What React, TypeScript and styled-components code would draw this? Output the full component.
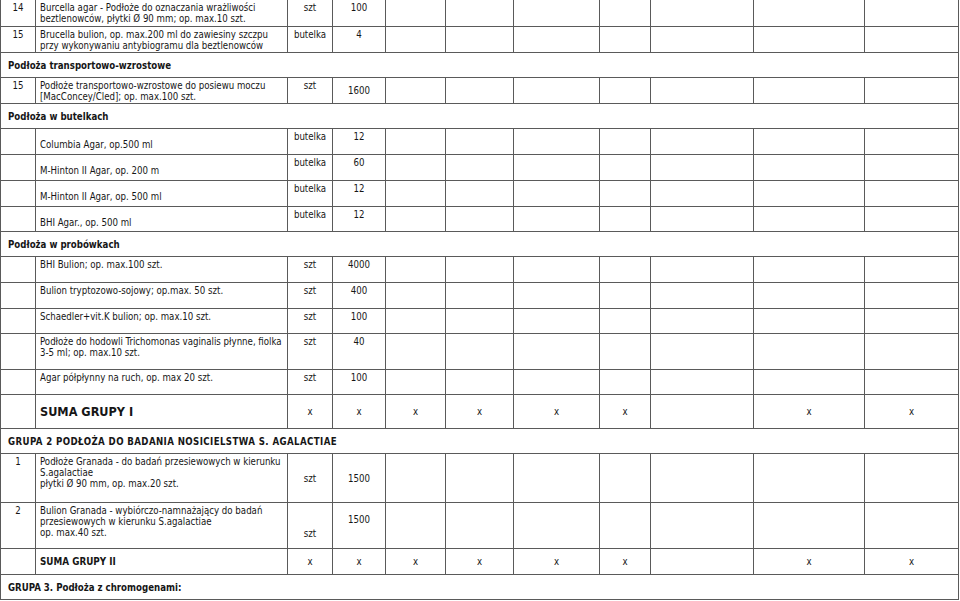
import styled, { createGlobalStyle } from 'styled-components'

const GlobalStyle = createGlobalStyle`
  html, body {
    margin: 0;
    padding: 0;
    background: #fff;
  }
  body {
    font-family: 'DejaVu Sans Condensed', 'DejaVu Sans', sans-serif;
    color: #161616;
    overflow: hidden;
  }
`

const Page = styled.div`
  width: 960px;
  height: 601px;
  overflow: hidden;
`

const Sheet = styled.table`
  border-collapse: collapse;
  table-layout: fixed;
  width: 959px;
  margin-top: -1px;
  font-size: 9.6px;
  line-height: 11px;
`

type VAlign = 'top' | 'middle' | 'bottom'

const Row = styled.tr<{ $h: number }>`
  height: ${({ $h }) => $h}px;
`

const Cell = styled.td<{ $v?: VAlign; $pt?: number; $center?: boolean }>`
  border: 1px solid #5a5a5a;
  padding: ${({ $pt }) => $pt ?? 2}px 3px 0 3px;
  vertical-align: ${({ $v }) => $v ?? 'top'};
  text-align: ${({ $center }) => ($center ? 'center' : 'left')};
  white-space: nowrap;
  overflow: hidden;
`

const DescCell = styled(Cell)`
  padding-left: 4px;
`

const SectionCell = styled.td<{ $wide?: boolean }>`
  border: 1px solid #5a5a5a;
  padding: 0 7px;
  vertical-align: middle;
  font-weight: bold;
  font-size: 9.6px;
  letter-spacing: ${({ $wide }) => ($wide ? 0.4 : 0)}px;
  white-space: nowrap;
`

const SumTitle = styled.span<{ $big?: boolean }>`
  font-weight: bold;
  font-size: ${({ $big }) => ($big ? 12.6 : 9.8)}px;
`

const colWidths = [35, 252, 45, 53, 60, 68, 86, 51, 103, 111, 94]

type Item = {
  no?: string
  desc: string[]
  unit: string
  qty: string
  h: number
  descV?: VAlign
  descPt?: number
  unitPt?: number
  qtyV?: VAlign
  qtyPt?: number
}

type Block =
  | { kind: 'section'; title: string; h: number; wide?: boolean }
  | { kind: 'item'; item: Item }
  | { kind: 'sum'; title: string; big?: boolean; h: number }

const bottle = (desc: string, qty: string, h = 26): Block => ({
  kind: 'item',
  item: { desc: [desc], unit: 'butelka', qty, h, descV: 'middle', descPt: 6 },
})

const tube = (desc: string[], qty: string, h = 26): Block => ({
  kind: 'item',
  item: { desc, unit: 'szt', qty, h },
})

const blocks: Block[] = [
  {
    kind: 'item',
    item: {
      no: '14',
      desc: [
        'Burcella agar - Podłoże do oznaczania wrażliwości',
        'beztlenowców, płytki Ø 90 mm; op. max.10 szt.',
      ],
      unit: 'szt',
      qty: '100',
      h: 27,
    },
  },
  {
    kind: 'item',
    item: {
      no: '15',
      desc: [
        'Brucella bulion, op. max.200 ml do zawiesiny szczpu',
        'przy wykonywaniu antybiogramu dla beztlenowców',
      ],
      unit: 'butelka',
      qty: '4',
      h: 26,
    },
  },
  { kind: 'section', title: 'Podłoża transportowo-wzrostowe', h: 25 },
  {
    kind: 'item',
    item: {
      no: '15',
      desc: [
        'Podłoże transportowo-wzrostowe do posiewu moczu',
        '[MacConcey/Cled]; op. max.100 szt.',
      ],
      unit: 'szt',
      qty: '1600',
      h: 26,
      qtyV: 'middle',
      qtyPt: 0,
    },
  },
  { kind: 'section', title: 'Podłoża w butelkach', h: 25 },
  bottle('Columbia Agar, op.500 ml', '12'),
  bottle('M-Hinton II Agar, op. 200 m', '60'),
  bottle('M-Hinton II Agar, op. 500 ml', '12'),
  bottle('BHI Agar., op. 500 ml', '12', 25),
  { kind: 'section', title: 'Podłoża w probówkach', h: 25 },
  tube(['BHI Bulion; op. max.100 szt.'], '4000'),
  tube(['Bulion tryptozowo-sojowy; op.max. 50 szt.'], '400'),
  tube(['Schaedler+vit.K bulion; op. max.10 szt.'], '100', 25),
  tube(
    ['Podłoże do hodowli Trichomonas vaginalis płynne, fiolka', '3-5 ml; op. max.10 szt.'],
    '40',
    36,
  ),
  tube(['Agar półpłynny na ruch, op. max 20 szt.'], '100', 25),
  { kind: 'sum', title: 'SUMA GRUPY I', big: true, h: 34 },
  {
    kind: 'section',
    title: 'GRUPA 2 PODŁOŻA DO BADANIA NOSICIELSTWA S. AGALACTIAE',
    h: 25,
    wide: true,
  },
  {
    kind: 'item',
    item: {
      no: '1',
      desc: [
        'Podłoże Granada - do badań przesiewowych w kierunku',
        'S.agalactiae',
        'płytki Ø 90 mm, op. max.20 szt.',
      ],
      unit: 'szt',
      qty: '1500',
      h: 49,
      unitPt: 19,
      qtyPt: 19,
    },
  },
  {
    kind: 'item',
    item: {
      no: '2',
      desc: [
        'Bulion Granada - wybiórczo-namnażający do badań',
        'przesiewowych w kierunku S.agalactiae',
        'op. max.40 szt.',
      ],
      unit: 'szt',
      qty: '1500',
      h: 46,
      unitPt: 25,
      qtyPt: 11,
    },
  },
  { kind: 'sum', title: 'SUMA GRUPY II', h: 26 },
  { kind: 'section', title: 'GRUPA 3. Podłoża z chromogenami:', h: 25 },
]

// which price columns carry an "x" in the summary rows
const sumMarks = [true, true, true, true, true, true, false, true, true]

export default function App() {
  return (
    <Page>
      <GlobalStyle />
      <Sheet>
        <colgroup>
          {colWidths.map((w, i) => (
            <col key={i} style={{ width: w }} />
          ))}
        </colgroup>
        <tbody>
          {blocks.map((b, i) => {
            if (b.kind === 'section') {
              return (
                <Row key={i} $h={b.h}>
                  <SectionCell colSpan={11} $wide={b.wide}>
                    {b.title}
                  </SectionCell>
                </Row>
              )
            }
            if (b.kind === 'sum') {
              return (
                <Row key={i} $h={b.h}>
                  <Cell />
                  <DescCell $v="middle" $pt={0}>
                    <SumTitle $big={b.big}>{b.title}</SumTitle>
                  </DescCell>
                  {sumMarks.map((m, j) => (
                    <Cell key={j} $v="middle" $pt={0} $center>
                      {m ? 'x' : ''}
                    </Cell>
                  ))}
                </Row>
              )
            }
            const it = b.item
            return (
              <Row key={i} $h={it.h}>
                <Cell $center>{it.no}</Cell>
                <DescCell $v={it.descV} $pt={it.descPt}>
                  {it.desc.map((line, k) => (
                    <div key={k}>{line}</div>
                  ))}
                </DescCell>
                <Cell $center $pt={it.unitPt}>
                  {it.unit}
                </Cell>
                <Cell $center $v={it.qtyV} $pt={it.qtyPt}>
                  {it.qty}
                </Cell>
                {colWidths.slice(4).map((_, j) => (
                  <Cell key={j} />
                ))}
              </Row>
            )
          })}
        </tbody>
      </Sheet>
    </Page>
  )
}
